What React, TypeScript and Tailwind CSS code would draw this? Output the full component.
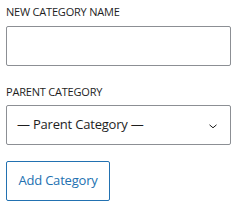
export default function App() {
  return (
    <div className="w-[246px] h-[210px] bg-white px-[6px] pt-[4px] font-['Open_Sans',sans-serif] text-[#1e1e1e]">
      <label className="block text-[11px] leading-[16px] font-medium uppercase tracking-[-0.2px] mb-[6px]">
        New Category Name
      </label>
      <input
        type="text"
        className="block w-[225px] h-[40px] border border-[#8c8f94] rounded-[2px] bg-white px-[8px] text-[13px] outline-none"
      />
      <label className="block mt-[18px] text-[11px] leading-[16px] font-medium uppercase tracking-[-0.2px] mb-[5px]">
        Parent Category
      </label>
      <div className="flex items-center justify-between w-[225px] h-[40px] border border-[#8c8f94] rounded-[2px] pl-[10px] pr-[13px] text-[13px] tracking-[-0.2px]">
        <span>— Parent Category —</span>
        <svg width="8" height="5" viewBox="0 0 8 5" fill="none" className="mt-[2px]">
          <path d="M0.5 0.8 L4 3.8 L7.5 0.8" stroke="#1e1e1e" strokeWidth="1" />
        </svg>
      </div>
      <button className="mt-[16px] h-[40px] w-[104px] border border-[#2271b1] rounded-[2px] text-[#2271b1] text-[13px] tracking-[-0.2px] bg-white">
        Add Category
      </button>
    </div>
  );
}
